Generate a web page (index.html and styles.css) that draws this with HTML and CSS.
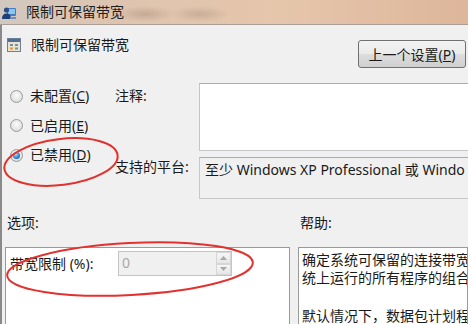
FILE: index.html
```html
<!DOCTYPE html>
<html lang="zh-CN">
<head>
  <meta charset="UTF-8">
  <title>限制可保留带宽</title>
  <link rel="stylesheet" href="styles.css">
</head>
<body>
  <div class="titlebar">
    <svg class="title-icon" width="15" height="15" viewBox="0 0 15 15">
      <rect x="5" y="3" width="9" height="8" rx="1" fill="#3f7fc8"/>
      <rect x="6" y="4" width="7" height="5" fill="#8cc4f0"/>
      <circle cx="4.5" cy="5" r="2.6" fill="#2a4f86"/>
      <path d="M0 14 Q0 8.5 4.5 8.5 Q9 8.5 9 14 Z" fill="#1d3f78"/>
      <rect x="8" y="12" width="6" height="2" fill="#6b8fb8"/>
    </svg>
    <span class="title-text">限制可保留带宽</span>
  </div>

  <div class="window">
    <div class="head">
      <div class="head-title">
        <svg class="head-icon" width="14" height="14" viewBox="0 0 14 14">
          <rect x="0.5" y="0.5" width="13" height="13" fill="#e9e2cf" stroke="#6f7f95"/>
          <rect x="1" y="1" width="12" height="3" fill="#4f6f9a"/>
          <rect x="3" y="6" width="3" height="2" fill="#7c8fa8"/>
          <rect x="8" y="6" width="3" height="2" fill="#7c8fa8"/>
          <rect x="3" y="9.5" width="3" height="2" fill="#d49a3c"/>
          <rect x="8" y="9.5" width="3" height="2" fill="#7c8fa8"/>
        </svg>
        <span>限制可保留带宽</span>
      </div>
      <button class="btn">上一个设置(<u>P</u>)</button>
    </div>

    <div class="main">
      <div class="radios">
        <label class="radio"><span class="dot"></span><span>未配置(<u>C</u>)</span></label>
        <label class="radio"><span class="dot"></span><span>已启用(<u>E</u>)</span></label>
        <label class="radio"><span class="dot on"></span><span>已禁用(<u>D</u>)</span></label>
      </div>
      <div class="fields">
        <div class="field-label first">注释:</div>
        <div class="comment"></div>
        <div class="field-label">支持的平台:</div>
        <div class="platform">至少 Windows XP Professional 或 Windo</div>
      </div>
    </div>

    <div class="panes">
      <div class="pane-label">选项:</div>
      <div class="pane-label">帮助:</div>
      <div class="options">
        <div class="opt-row">
          <span class="opt-label">带宽限制 (%):</span>
          <div class="spin">
            <span class="spin-val">0</span>
            <div class="spin-btns">
              <span class="spin-btn"><svg width="7" height="4" viewBox="0 0 7 4"><path d="M0 4 L3.5 0 L7 4 Z" fill="#a8a8a8"/></svg></span>
              <span class="spin-btn"><svg width="7" height="4" viewBox="0 0 7 4"><path d="M0 0 L3.5 4 L7 0 Z" fill="#a8a8a8"/></svg></span>
            </div>
          </div>
        </div>
      </div>
      <div class="help">
        <div class="help-line">确定系统可保留的连接带宽</div>
        <div class="help-line">统上运行的所有程序的组合</div>
        <div class="help-line para">默认情况下，数据包计划程</div>
      </div>
    </div>
  </div>

  <svg class="marks" width="468" height="324" viewBox="0 0 468 324">
    <ellipse cx="61" cy="162" rx="57" ry="23" transform="rotate(-7 61 162)" fill="none" stroke="#e2322f" stroke-width="2"/>
    <ellipse cx="130" cy="269" rx="123" ry="26" transform="rotate(-3 130 269)" fill="none" stroke="#e2322f" stroke-width="2"/>
  </svg>
</body>
</html>
```

FILE: styles.css
```css
body {
  margin: 0;
  width: 468px;
  height: 324px;
  overflow: hidden;
  position: relative;
  background: #f0f0f0;
  font-family: "Noto Sans", "Noto Sans CJK SC", sans-serif;
  font-size: 14px;
  color: #1a1a1a;
}

.titlebar {
  height: 24px;
  display: flex;
  align-items: center;
  padding-left: 2px;
  border-bottom: 1px solid #a89e96;
  background:
    radial-gradient(ellipse 30px 8px at 145px 14px, rgba(150, 120, 100, 0.35), transparent),
    radial-gradient(ellipse 30px 8px at 200px 14px, rgba(150, 120, 100, 0.3), transparent),
    linear-gradient(90deg, #d2c8c0 0%, #dec4b0 25%, #e6c6ab 60%, #ddb69b 100%);
}

.title-icon {
  margin-right: 9px;
}

.title-text {
  line-height: 18px;
  color: #1e1e1e;
}

.window {
  border-left: 2px solid #8a8a8a;
  height: 299px;
  overflow: hidden;
}

.head {
  display: flex;
  justify-content: space-between;
  padding: 13px 2px 0 5px;
}

.head-title {
  display: flex;
  align-items: center;
  gap: 10px;
  height: 14px;
  line-height: 18px;
}

.btn {
  margin-top: 2px;
  width: 108px;
  height: 28px;
  padding: 0;
  border: 1px solid #707070;
  border-radius: 3px;
  background: linear-gradient(#f2f2f2 0%, #ebebeb 50%, #dddddd 51%, #cfcfcf 100%);
  font-family: inherit;
  font-size: 14px;
  color: #1a1a1a;
}

.main {
  display: flex;
  margin-top: 15px;
}

.radios {
  width: 105px;
  padding: 3px 0 0 8px;
  display: flex;
  flex-direction: column;
  gap: 9.5px;
}

.radio {
  display: flex;
  align-items: center;
  gap: 7px;
  height: 20px;
  line-height: 18px;
}

.dot {
  width: 11px;
  height: 11px;
  border-radius: 50%;
  border: 1px solid #9a9a9a;
  background: radial-gradient(circle at 50% 40%, #fbfbfb 0%, #e4e4e4 60%, #cdcdcd 100%);
  position: relative;
}

.dot.on::after {
  content: "";
  position: absolute;
  left: 2px;
  top: 2px;
  width: 7px;
  height: 7px;
  border-radius: 50%;
  background: radial-gradient(circle at 40% 35%, #b9e3ff 0%, #3a94e0 45%, #103f8c 100%);
}

.fields {
  flex: 1;
  display: grid;
  grid-template-columns: 84px 1fr;
  grid-template-rows: 68px 42px;
  row-gap: 6px;
  min-width: 0;
}

.field-label {
  line-height: 18px;
  padding-top: 1px;
}

.field-label.first {
  padding-top: 4px;
}

.comment {
  background: #fff;
  border: 1px solid #c4c6ca;
  border-top-color: #a9abb0;
  border-right: none;
}

.platform {
  border: 1px solid #c8c8c8;
  border-top-color: #aaaaaa;
  border-right: none;
  background: #f0f0f0;
  padding: 3px 0 0 5px;
  line-height: 18px;
  white-space: nowrap;
  overflow: hidden;
}

.panes {
  display: grid;
  grid-template-columns: 285px 1fr;
  column-gap: 8px;
  padding-left: 3px;
  margin-top: 15px;
}

.pane-label {
  line-height: 18px;
  padding-left: 2px;
  margin-bottom: 15px;
}

.options,
.help {
  background: #fff;
  border: 1px solid #9a9a9a;
  height: 100px;
}

.options {
  padding: 3px 0 0 4px;
}

.opt-row {
  display: flex;
  align-items: center;
}

.opt-label {
  width: 108px;
  line-height: 18px;
}

.spin {
  width: 112px;
  height: 23px;
  border: 1px solid #c2c4c6;
  background: #f0f0f0;
  display: flex;
  justify-content: space-between;
}

.spin-val {
  padding-left: 3px;
  line-height: 22px;
  color: #a8a8a8;
}

.spin-btns {
  width: 15px;
  display: flex;
  flex-direction: column;
}

.spin-btn {
  flex: 1;
  display: flex;
  align-items: center;
  justify-content: center;
  border: 1px solid #d6d6d6;
  background: linear-gradient(#f6f6f6, #e6e6e6);
}

.help {
  padding: 3px 0 0 3px;
  overflow: hidden;
  min-width: 0;
}

.help-line {
  line-height: 18px;
  white-space: nowrap;
}

.help-line.para {
  margin-top: 20px;
}

.marks {
  position: absolute;
  left: 0;
  top: 0;
  pointer-events: none;
}
```
